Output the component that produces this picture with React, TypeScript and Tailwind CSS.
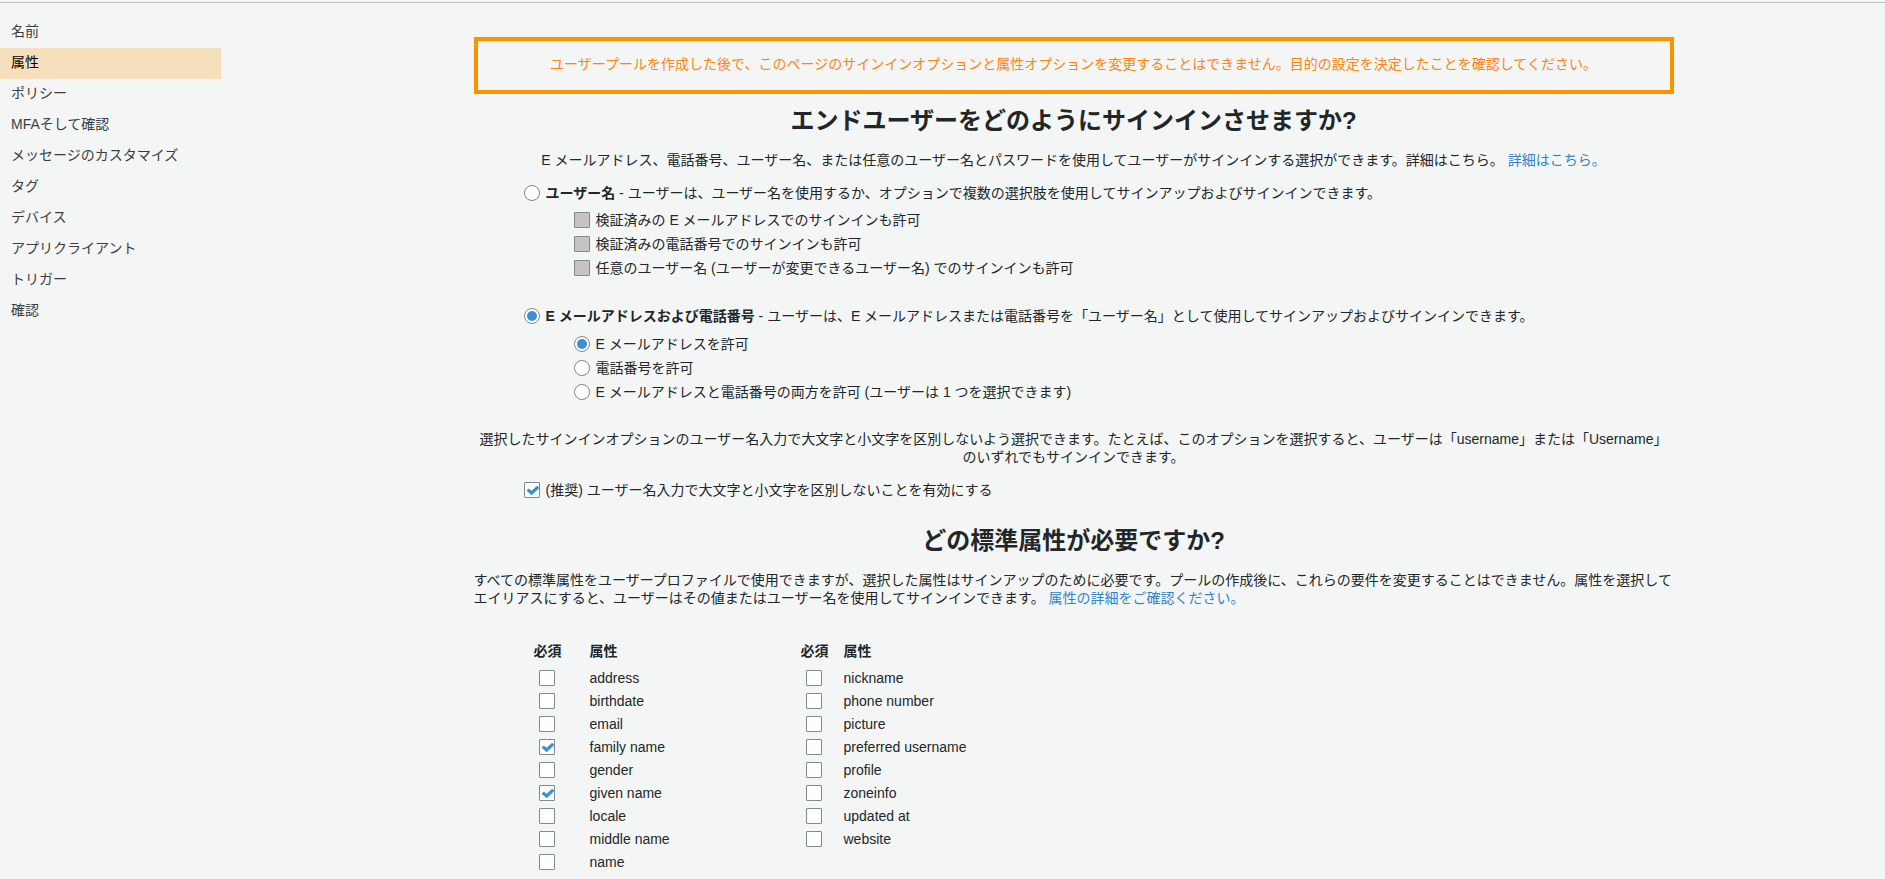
import { useState, type ReactNode } from "react";

const STEPS = [
  "名前",
  "属性",
  "ポリシー",
  "MFAそして確認",
  "メッセージのカスタマイズ",
  "タグ",
  "デバイス",
  "アプリクライアント",
  "トリガー",
  "確認",
];

const ATTRIBUTES_LEFT = [
  "address",
  "birthdate",
  "email",
  "family name",
  "gender",
  "given name",
  "locale",
  "middle name",
  "name",
];

const ATTRIBUTES_RIGHT = [
  "nickname",
  "phone number",
  "picture",
  "preferred username",
  "profile",
  "zoneinfo",
  "updated at",
  "website",
];

type CheckboxProps = {
  id: string;
  defaultChecked?: boolean;
  disabled?: boolean;
};

function Checkbox({ id, defaultChecked, disabled }: CheckboxProps) {
  return (
    <span className="grid size-4 shrink-0">
      <input
        id={id}
        type="checkbox"
        defaultChecked={defaultChecked}
        disabled={disabled}
        className="peer col-start-1 row-start-1 size-4 appearance-none rounded-[1px] border border-[#7f8b8c] bg-white disabled:bg-[#c4c4c4]"
      />
      <svg
        viewBox="0 0 16 16"
        aria-hidden="true"
        className="pointer-events-none col-start-1 row-start-1 hidden size-4 peer-checked:block"
      >
        <path d="M3.7 7.6 L7.6 11 L14.2 4.8" fill="none" stroke="#3a8fd3" strokeWidth="3.2" />
      </svg>
    </span>
  );
}

type RadioProps = {
  id: string;
  name: string;
  checked: boolean;
  onSelect: () => void;
};

function Radio({ id, name, checked, onSelect }: RadioProps) {
  return (
    <span className="grid size-4 shrink-0 place-items-center">
      <input
        id={id}
        type="radio"
        name={name}
        checked={checked}
        onChange={onSelect}
        className="peer col-start-1 row-start-1 size-4 appearance-none rounded-full border border-[#7f8b8c] bg-white"
      />
      <span className="pointer-events-none col-start-1 row-start-1 hidden size-[10px] rounded-full bg-[#3a8fd3] peer-checked:block" />
    </span>
  );
}

function Option({ htmlFor, control, children }: { htmlFor: string; control: ReactNode; children: ReactNode }) {
  return (
    <div className="flex items-center gap-[6px]">
      {control}
      <label htmlFor={htmlFor}>{children}</label>
    </div>
  );
}

function AttributeTable({ items, required, wide }: { items: string[]; required: string[]; wide?: boolean }) {
  return (
    <table className="border-collapse text-left">
      <thead>
        <tr className="h-[24px] align-top">
          <th className={wide ? "w-[56px] font-bold" : "w-[43px] font-bold"}>必須</th>
          <th className="font-bold">属性</th>
        </tr>
      </thead>
      <tbody>
        {items.map((item) => {
          const id = "attr-" + item.replace(" ", "-");
          return (
            <tr key={item} className="h-[23px]">
              <td className="pl-[5px]">
                <Checkbox id={id} defaultChecked={required.includes(item)} />
              </td>
              <td>
                <label htmlFor={id} className="block">
                  {item}
                </label>
              </td>
            </tr>
          );
        })}
      </tbody>
    </table>
  );
}

export default function App() {
  const [mode, setMode] = useState("contact");
  const [contact, setContact] = useState("email");

  return (
    <div className="min-h-screen bg-[#f4f6f6] pt-[2px] font-['Liberation_Sans','Noto_Sans_CJK_JP',sans-serif] text-[14px] leading-[18px] text-[#222629]">
      <div className="flex border-t border-[#bfc3c3]">
        <nav className="mr-[41px] w-[221px] shrink-0 pt-[14px]">
          <ul>
            {STEPS.map((step) => (
              <li key={step}>
                <a
                  href="#"
                  aria-current={step === "属性" ? "step" : undefined}
                  className="block h-[31px] pl-[11px] leading-[28px] text-[#3a3d40] aria-[current=step]:bg-[#f6dfbd] aria-[current=step]:text-black"
                >
                  {step}
                </a>
              </li>
            ))}
          </ul>
        </nav>

        <main className="flex min-w-0 flex-1 justify-center pt-[34px]">
          <div className="w-full max-w-[1200px]">
            <p className="border-4 border-[#ff9000] pt-[15px] pb-[17px] text-center leading-[17px] text-[#ff8410]">
              ユーザープールを作成した後で、このページのサインインオプションと属性オプションを変更することはできません。目的の設定を決定したことを確認してください。
            </p>

            <h1 className="mt-[12px] text-center text-[24px] leading-[30px] font-bold">
              エンドユーザーをどのようにサインインさせますか?
            </h1>
            <p className="mt-[15px] text-center">
              E メールアドレス、電話番号、ユーザー名、または任意のユーザー名とパスワードを使用してユーザーがサインインする選択ができます。詳細はこちら。{" "}
              <a href="#" className="text-[#3184c9]">
                詳細はこちら。
              </a>
            </p>

            <div className="mt-[15px] pl-[50px]">
              <Option
                htmlFor="mode-username"
                control={
                  <Radio
                    id="mode-username"
                    name="mode"
                    checked={mode === "username"}
                    onSelect={() => setMode("username")}
                  />
                }
              >
                <b>ユーザー名</b> -
                ユーザーは、ユーザー名を使用するか、オプションで複数の選択肢を使用してサインアップおよびサインインできます。
              </Option>
              <div className="mt-[9px] flex flex-col gap-[6px] pl-[50px]">
                <Option htmlFor="allow-email" control={<Checkbox id="allow-email" disabled />}>
                  検証済みの E メールアドレスでのサインインも許可
                </Option>
                <Option htmlFor="allow-phone" control={<Checkbox id="allow-phone" disabled />}>
                  検証済みの電話番号でのサインインも許可
                </Option>
                <Option htmlFor="allow-preferred" control={<Checkbox id="allow-preferred" disabled />}>
                  任意のユーザー名 (ユーザーが変更できるユーザー名) でのサインインも許可
                </Option>
              </div>
            </div>

            <div className="mt-[30px] pl-[50px]">
              <Option
                htmlFor="mode-contact"
                control={
                  <Radio
                    id="mode-contact"
                    name="mode"
                    checked={mode === "contact"}
                    onSelect={() => setMode("contact")}
                  />
                }
              >
                <b>E メールアドレスおよび電話番号</b> - ユーザーは、E
                メールアドレスまたは電話番号を「ユーザー名」として使用してサインアップおよびサインインできます。
              </Option>
              <div className="mt-[10px] flex flex-col gap-[6px] pl-[50px]">
                <Option
                  htmlFor="contact-email"
                  control={
                    <Radio
                      id="contact-email"
                      name="contact"
                      checked={contact === "email"}
                      onSelect={() => setContact("email")}
                    />
                  }
                >
                  E メールアドレスを許可
                </Option>
                <Option
                  htmlFor="contact-phone"
                  control={
                    <Radio
                      id="contact-phone"
                      name="contact"
                      checked={contact === "phone"}
                      onSelect={() => setContact("phone")}
                    />
                  }
                >
                  電話番号を許可
                </Option>
                <Option
                  htmlFor="contact-both"
                  control={
                    <Radio
                      id="contact-both"
                      name="contact"
                      checked={contact === "both"}
                      onSelect={() => setContact("both")}
                    />
                  }
                >
                  E メールアドレスと電話番号の両方を許可 (ユーザーは 1 つを選択できます)
                </Option>
              </div>
            </div>

            <p className="mt-[29px] text-center">
              選択したサインインオプションのユーザー名入力で大文字と小文字を区別しないよう選択できます。たとえば、このオプションを選択すると、ユーザーは「username」または「Username」のいずれでもサインインできます。
            </p>
            <div className="mt-[15px] pl-[50px]">
              <Option htmlFor="case-insensitive" control={<Checkbox id="case-insensitive" defaultChecked />}>
                (推奨) ユーザー名入力で大文字と小文字を区別しないことを有効にする
              </Option>
            </div>

            <h1 className="mt-[27px] text-center text-[24px] leading-[30px] font-bold">
              どの標準属性が必要ですか?
            </h1>
            <p className="mt-[15px]">
              すべての標準属性をユーザープロファイルで使用できますが、選択した属性はサインアップのために必要です。プールの作成後に、これらの要件を変更することはできません。属性を選択してエイリアスにすると、ユーザーはその値またはユーザー名を使用してサインインできます。{" "}
              <a href="#" className="text-[#3184c9]">
                属性の詳細をご確認ください。
              </a>
            </p>

            <div className="mt-[35px] flex items-start pl-[60px]">
              <div className="w-[267px]">
                <AttributeTable items={ATTRIBUTES_LEFT} required={["family name", "given name"]} wide />
              </div>
              <AttributeTable items={ATTRIBUTES_RIGHT} required={[]} />
            </div>
          </div>
        </main>
      </div>
    </div>
  );
}
